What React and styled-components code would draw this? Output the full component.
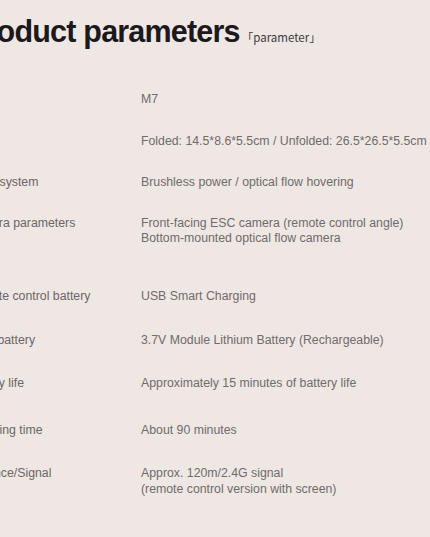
import React from 'react';
import styled, { createGlobalStyle } from 'styled-components';

const GlobalStyle = createGlobalStyle`
  html, body {
    margin: 0;
    padding: 0;
    background: #efe7e4;
    overflow: hidden;
  }
  body {
    font-family: "Liberation Sans", Arial, sans-serif;
  }
`;

const rows = [
  { label: 'Model', value: ['M7'], gap: 43 },
  { label: 'Size', value: ['Folded: 14.5*8.6*5.5cm / Unfolded: 26.5*26.5*5.5cm'], gap: 26 },
  { label: 'Flight system', value: ['Brushless power / optical flow hovering'], gap: 26 },
  {
    label: 'Camera parameters',
    value: ['Front-facing ESC camera (remote control angle)', 'Bottom-mounted optical flow camera'],
    gap: 25,
  },
  { label: 'Remote control battery', value: ['USB Smart Charging'], gap: 42 },
  { label: 'Body battery', value: ['3.7V Module Lithium Battery (Rechargeable)'], gap: 28.5 },
  { label: 'Battery life', value: ['Approximately 15 minutes of battery life'], gap: 27.5 },
  { label: 'Charging time', value: ['About 90 minutes'], gap: 31.5 },
  {
    label: 'Distance/Signal',
    value: ['Approx. 120m/2.4G signal', '(remote control version with screen)'],
    gap: 28,
  },
];

const App = () => {
  return (
    <>
      <GlobalStyle />
      <Page>
        <Heading>
          <Title>Product parameters</Title>
          <Sub>「parameter」</Sub>
        </Heading>

        <Table>
          {rows.map((r) => (
            <Row key={r.label} $gap={r.gap}>
              <Label>{r.label}</Label>
              <Value>
                {r.value.map((line) => (
                  <div key={line}>{line}</div>
                ))}
              </Value>
            </Row>
          ))}
        </Table>
      </Page>
    </>
  );
};

// the screenshot is a crop of a wider page, its left edge sits off screen
const Page = styled.div`
  margin-left: -34px;
  width: 520px;
  padding-top: 14px;
`;

const Heading = styled.div`
  display: flex;
  align-items: baseline;
  white-space: nowrap;
`;

const Title = styled.h1`
  margin: 0;
  font-size: 30.5px;
  line-height: 35px;
  font-weight: 700;
  letter-spacing: -0.8px;
  color: #1b191b;
`;

const Sub = styled.span`
  margin-left: 2px;
  font-family: "Noto Sans CJK SC", "Noto Sans", sans-serif;
  font-size: 11.5px;
  color: #3e3a3a;
`;

const Table = styled.div`
  display: flex;
  flex-direction: column;
`;

const Row = styled.div`
  display: grid;
  grid-template-columns: 175px 1fr;
  margin-top: ${(p) => p.$gap}px;
  font-size: 12.3px;
  line-height: 15.5px;
  white-space: nowrap;
`;

const Label = styled.div`
  color: #6c6665;
`;

const Value = styled.div`
  color: #716b6a;
`;

export default App;
